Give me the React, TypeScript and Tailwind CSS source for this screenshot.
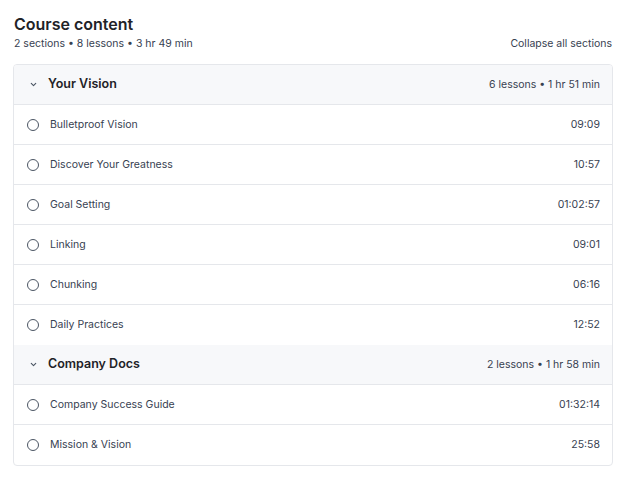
import React from 'react';

const sections = [
  {
    title: 'Your Vision',
    meta: '6 lessons • 1 hr 51 min',
    lessons: [
      ['Bulletproof Vision', '09:09'],
      ['Discover Your Greatness', '10:57'],
      ['Goal Setting', '01:02:57'],
      ['Linking', '09:01'],
      ['Chunking', '06:16'],
      ['Daily Practices', '12:52'],
    ],
  },
  {
    title: 'Company Docs',
    meta: '2 lessons • 1 hr 58 min',
    lessons: [
      ['Company Success Guide', '01:32:14'],
      ['Mission & Vision', '25:58'],
    ],
  },
];

function Chevron() {
  return (
    <svg width="9" height="9" viewBox="0 0 10 10" fill="none" stroke="#4b5563" strokeWidth="1.2" strokeLinecap="round" strokeLinejoin="round">
      <path d="M2.5 3.8 5 6.3 7.5 3.8" />
    </svg>
  );
}

export default function App() {
  return (
    <div className="min-h-screen bg-white px-[14px] pt-[13px] font-['Inter',sans-serif] text-[#1f2937]">
      <div className="flex items-end justify-between">
        <div>
          <h1 className="text-[16px] font-semibold leading-[22px] text-[#1f2328]">Course content</h1>
          <p className="mt-[2px] text-[10.5px] leading-[14px] text-[#374151]">2 sections • 8 lessons • 3 hr 49 min</p>
        </div>
        <button className="mr-[1px] text-[10.5px] leading-[14px] text-[#374151]">Collapse all sections</button>
      </div>

      <div className="mt-[13px] w-[600px] -ml-[1px] overflow-hidden rounded-[4px] border border-[#e5e7eb]">
        {sections.map((s) => (
          <div key={s.title}>
            <div className="flex h-[40px] items-center justify-between border-b border-[#e5e7eb] bg-[#f7f8fa] pl-[15px] pr-[12px]">
              <div className="flex items-center gap-[10px]">
                <Chevron />
                <span className="text-[12.5px] font-semibold text-[#1f2328]">{s.title}</span>
              </div>
              <span className="text-[10.5px] text-[#374151]">{s.meta}</span>
            </div>
            {s.lessons.map(([name, time], i) => (
              <div
                key={name}
                className={`flex h-[40px] items-center justify-between pl-[13px] pr-[12px] ${
                  i < s.lessons.length - 1 ? 'border-b border-[#e5e7eb]' : ''
                }`}
              >
                <div className="flex items-center gap-[11px]">
                  <span className="h-[12px] w-[12px] rounded-full border-[1.3px] border-[#4b5563]" />
                  <span className="text-[10.5px] text-[#374151]">{name}</span>
                </div>
                <span className="text-[10.5px] text-[#374151]">{time}</span>
              </div>
            ))}
          </div>
        ))}
      </div>
    </div>
  );
}
